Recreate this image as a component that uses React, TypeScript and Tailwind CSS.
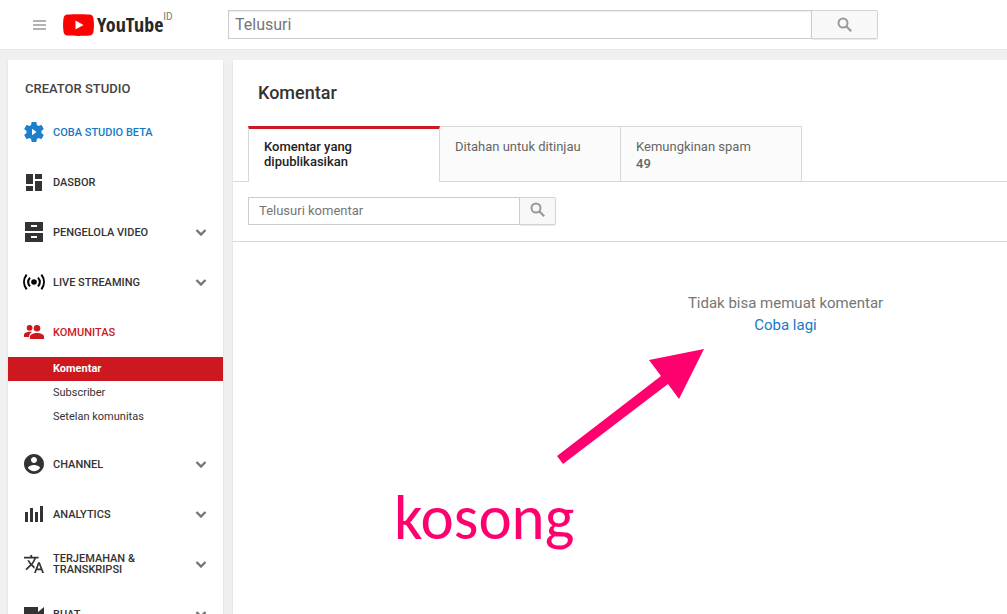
import React from 'react';

interface NavItem {
    label: string;
    icon: React.ReactNode;
    expandable?: boolean;
    tone?: 'blue' | 'red';
    children?: string[];
}

const GearIcon = () => (
    <svg width="24" height="24" viewBox="0 0 24 24" fill="#1b7fcc" fillRule="evenodd">
        <path d="M19.43 12.98c.04-.32.07-.64.07-.98s-.03-.66-.07-.98l2.11-1.65c.19-.15.24-.42.12-.64l-2-3.46c-.12-.22-.39-.3-.61-.22l-2.49 1c-.52-.4-1.08-.73-1.69-.98l-.38-2.65C14.46 2.18 14.25 2 14 2h-4c-.25 0-.46.18-.49.42l-.38 2.65c-.61.25-1.17.59-1.69.98l-2.49-1c-.23-.09-.49 0-.61.22l-2 3.46c-.13.22-.07.49.12.64l2.11 1.65c-.04.32-.07.65-.07.98s.03.66.07.98l-2.11 1.65c-.19.15-.24.42-.12.64l2 3.46c.12.22.39.3.61.22l2.49-1c.52.4 1.08.73 1.69.98l.38 2.65c.03.24.24.42.49.42h4c.25 0 .46-.18.49-.42l.38-2.65c.61-.25 1.17-.59 1.69-.98l2.49 1c.23.09.49 0 .61-.22l2-3.46c.12-.22.07-.49-.12-.64l-2.11-1.65zM10 8.8v6.4l4.5-3.2z" />
    </svg>
);

const DashboardIcon = () => (
    <svg width="24" height="24" viewBox="0 0 24 24" fill="#333">
        <path d="M4 4h7v10H4zM4 16h7v5H4zM13 4h7v5h-7zM13 11h7v10h-7z" />
    </svg>
);

const VideoManagerIcon = () => (
    <svg width="24" height="24" viewBox="0 0 24 24" fill="#333" fillRule="evenodd">
        <path d="M3 2h18v9H3zM9 5v2h6V5zM3 13h18v9H3zM9 16v2h6v-2z" />
    </svg>
);

const LiveIcon = () => (
    <svg width="24" height="24" viewBox="0 0 24 24" fill="none" stroke="#000" strokeWidth="2">
        <circle cx="12" cy="12" r="2.8" fill="#000" stroke="none" />
        <path d="M8 7.6c-2.2 2.6-2.2 6.2 0 8.8M16 7.6c2.2 2.6 2.2 6.2 0 8.8M4.6 4.6c-3.4 4.5-3.4 10.3 0 14.8M19.4 4.6c3.4 4.5 3.4 10.3 0 14.8" />
    </svg>
);

const CommunityIcon = () => (
    <svg width="24" height="24" viewBox="0 0 24 24" fill="#cc181e">
        <circle cx="7.6" cy="7.8" r="2.9" />
        <circle cx="15" cy="8.2" r="3.3" />
        <path d="M2 17v-2.2c0-2.2 3.4-3.2 6.4-3.1.7 0 1.3.1 1.8.2C8.2 12.9 7.2 14.3 7.2 16v1z" />
        <path d="M8 19v-2.4c0-2.4 3.8-3.7 7-3.7s7 1.3 7 3.7V19z" />
    </svg>
);

const ChannelIcon = () => (
    <svg width="24" height="24" viewBox="0 0 24 24" fill="#333">
        <path d="M12 2C6.48 2 2 6.48 2 12s4.48 10 10 10 10-4.48 10-10S17.52 2 12 2zm0 3c1.66 0 3 1.34 3 3s-1.34 3-3 3-3-1.34-3-3 1.34-3 3-3zm0 14.2c-2.5 0-4.71-1.28-6-3.22.03-1.99 4-3.08 6-3.08 1.99 0 5.97 1.09 6 3.08-1.29 1.94-3.5 3.22-6 3.22z" />
    </svg>
);

const AnalyticsIcon = () => (
    <svg width="24" height="24" viewBox="0 0 24 24" fill="#333">
        <path d="M3 10h3v10H3zM8 6h3v14H8zM13 10h3v10h-3zM18 4h3v16h-3z" />
    </svg>
);

const TranslateIcon = () => (
    <svg width="24" height="24" viewBox="-1.2 -1.2 26.4 26.4" fill="#333">
        <path d="M12.87 15.07l-2.54-2.51.03-.03c1.74-1.94 2.98-4.17 3.71-6.53H17V4h-7V2H8v2H1v1.99h11.17C11.5 7.92 10.44 9.75 9 11.35 8.07 10.32 7.3 9.19 6.69 8h-2c.73 1.63 1.73 3.17 2.98 4.56l-5.09 5.02L4 19l5-5 3.11 3.11.76-2.04zM18.5 10h-2L12 22h2l1.12-3h4.75L21 22h2l-4.5-12zm-2.62 7l1.62-4.33L19.12 17h-3.24z" />
    </svg>
);

const CameraIcon = () => (
    <svg width="24" height="24" viewBox="0 0 24 24" fill="#333">
        <path d="M2 5h14v5l6-5v14l-6-5v5H2z" />
    </svg>
);

const ChevronIcon = () => (
    <svg width="12" height="8" viewBox="0 0 12 8" fill="none" stroke="#757575" strokeWidth="2.4">
        <path d="M1.5 2L6 6.5l4.5-4.5" />
    </svg>
);

const SearchIcon = () => (
    <svg width="16" height="16" viewBox="0 0 16 16" fill="none" stroke="#999" strokeWidth="2">
        <circle cx="6" cy="6" r="4.5" />
        <path d="M9.2 9.2l5 5" strokeWidth="2.2" />
    </svg>
);

const MenuIcon = () => (
    <svg width="13" height="10" viewBox="0 0 13 10" fill="#b3b3b3">
        <path d="M0 0h13v2H0zM0 4h13v2H0zM0 8h13v2H0z" />
    </svg>
);

const NAV_ITEMS: NavItem[] = [
    { label: 'COBA STUDIO BETA', icon: <GearIcon />, tone: 'blue' },
    { label: 'DASBOR', icon: <DashboardIcon /> },
    { label: 'PENGELOLA VIDEO', icon: <VideoManagerIcon />, expandable: true },
    { label: 'LIVE STREAMING', icon: <LiveIcon />, expandable: true },
    { label: 'KOMUNITAS', icon: <CommunityIcon />, tone: 'red', children: ['Komentar', 'Subscriber', 'Setelan komunitas'] },
    { label: 'CHANNEL', icon: <ChannelIcon />, expandable: true },
    { label: 'ANALYTICS', icon: <AnalyticsIcon />, expandable: true },
    { label: 'TERJEMAHAN & TRANSKRIPSI', icon: <TranslateIcon />, expandable: true },
    { label: 'BUAT', icon: <CameraIcon />, expandable: true },
];

const getToneColor = (tone?: NavItem['tone']) => {
    switch (tone) {
        case 'blue': return 'text-[#167ac6]';
        case 'red': return 'text-[#cc181e]';
        default: return 'text-[#333]';
    }
};

const Masthead = () => (
    <header className="flex h-[50px] shrink-0 items-center border-b border-[#e8e8e8] bg-white">
        <button type="button" aria-label="Menu" className="ml-[33px]">
            <MenuIcon />
        </button>
        <a href="#" className="ml-[17px] flex h-7 w-[165px] items-center">
            <svg className="mr-[3px]" width="31" height="22" viewBox="0 0 31 22">
                <path d="M4.5.5C11 0 20 0 26.5.5c2.5.2 3.7 1.5 4 4 .6 4.5.6 8.5 0 13-.3 2.5-1.5 3.8-4 4-6.5.5-15.500.5-22 0-2.5-.2-3.7-1.5-4-4-.6-4.5-.6-8.5 0-13 .3-2.5 1.5-3.8 4-4z" fill="#f00" />
                <path d="M12.5 6.5v9l8-4.5z" fill="#fff" />
            </svg>
            <span className="font-['Noto_Sans_ExtraCondensed','Open_Sans_Condensed','Roboto_Condensed','Liberation_Sans_Narrow',sans-serif] text-[20px] leading-6 font-bold text-[#282828]">YouTube</span>
            <span className="self-start text-[10px] leading-3 text-[#777]">ID</span>
        </a>
        <form className="flex h-[29px] w-[650px]">
            <input
                type="text"
                aria-label="Telusuri"
                placeholder="Telusuri"
                className="min-w-0 flex-1 border border-[#ccc] bg-white px-[6px] text-base shadow-[inset_0_1px_2px_#eee] placeholder:text-[#767676]"
            />
            <button type="button" aria-label="Cari" className="flex w-[66px] items-center justify-center rounded-r-xs border border-l-0 border-[#d3d3d3] bg-[#f8f8f8] shadow-[0_1px_0_rgba(0,0,0,0.08)]">
                <SearchIcon />
            </button>
        </form>
    </header>
);

const Sidebar = () => (
    <nav className="w-[215px] shrink-0 bg-white shadow-[0_1px_2px_rgba(0,0,0,0.1)]">
        <h2 className="px-[17px] pt-5 pb-[9px] text-[13px] leading-[18px] font-medium text-[#444]">CREATOR STUDIO</h2>
        {NAV_ITEMS.map((item) => (
            <div key={item.label}>
                <a href="#" className={`flex h-[50px] items-center gap-[7px] pr-4 pl-[14px] text-[11px] leading-[11px] font-medium ${getToneColor(item.tone)}`}>
                    {item.icon}
                    <span className="w-[110px]">{item.label}</span>
                    {item.expandable && (
                        <span className="ml-auto">
                            <ChevronIcon />
                        </span>
                    )}
                </a>
                {item.children && (
                    <ul className="pb-[10px]">
                        {item.children.map((child, index) => (
                            <li key={child}>
                                <a href="#" className={`block pl-[45px] text-[11px] leading-6 ${index === 0 ? 'bg-[#cc181e] font-bold text-white' : 'text-[#333]'}`}>
                                    {child}
                                </a>
                            </li>
                        ))}
                    </ul>
                )}
            </div>
        ))}
    </nav>
);

const CommentTabs = () => (
    <div role="tablist" className="flex h-14 text-[13px] leading-[15px]">
        <div className="w-[15px] border-b border-[#d8d8d8]" />
        <button type="button" role="tab" aria-selected="true" className="flex w-[192px] flex-col items-start border-x border-t-[3px] border-x-[#d8d8d8] border-t-[#cc181e] px-[15px] pt-[10px] text-left font-medium text-[#222]">
            Komentar yang dipublikasikan
        </button>
        <button type="button" role="tab" aria-selected="false" className="flex w-[181px] flex-col items-start border-y border-r border-[#d8d8d8] bg-[#fbfbfb] px-[15px] pt-3 text-left text-[#666]">
            Ditahan untuk ditinjau
        </button>
        <button type="button" role="tab" aria-selected="false" className="flex w-[181px] flex-col items-start gap-[2px] border-y border-r border-[#d8d8d8] bg-[#fbfbfb] px-[15px] pt-3 text-left text-[#666]">
            Kemungkinan spam
            <span className="font-medium">49</span>
        </button>
        <div className="flex-1 border-b border-[#d8d8d8]" />
    </div>
);

const Annotation = () => (
    <div className="pointer-events-none absolute top-[288px] left-[161px] text-[#ff006e]">
        <svg className="ml-[163px]" width="148" height="116" viewBox="0 0 148 116" fill="currentColor">
            <path d="M147 1L92 12l12 16L0 108l6 8 105-80 11 15z" />
        </svg>
        <p className="mt-[18px] font-['Carlito','Lato',sans-serif] text-[63px] leading-[72px]">kosong</p>
    </div>
);

const App: React.FC = () => {
    return (
        <div className="flex h-screen flex-col overflow-hidden bg-[#f0f0f0] font-['Roboto',sans-serif]">
            <Masthead />
            <div className="flex min-h-0 flex-1 gap-[10px] pt-[10px] pl-2">
                <Sidebar />
                {/* the comments panel keeps a minimum width and is cut off on narrow windows */}
                <main className="relative min-w-[1105px] flex-1 bg-white shadow-[0_1px_2px_rgba(0,0,0,0.1)]">
                    <h1 className="px-[25px] py-[21px] text-lg leading-6 font-medium text-[#333]">Komentar</h1>
                    <CommentTabs />
                    <form className="flex h-[60px] items-start border-b border-[#d8d8d8] px-[15px] pt-[15px]">
                        <input
                            type="text"
                            aria-label="Telusuri komentar"
                            placeholder="Telusuri komentar"
                            className="h-7 w-[272px] border border-[#ccc] bg-white px-[10px] pb-[2px] text-[13px] placeholder:text-[#767676]"
                        />
                        <button type="button" aria-label="Cari komentar" className="flex h-7 w-9 items-center justify-center rounded-r-xs border border-l-0 border-[#d3d3d3] bg-[#f8f8f8] pb-[2px] shadow-[0_1px_0_rgba(0,0,0,0.08)]">
                            <SearchIcon />
                        </button>
                    </form>
                    <div className="pt-[50px] text-center text-[15px] leading-[22px] text-[#767676]">
                        <p>Tidak bisa memuat komentar</p>
                        <a href="#" className="text-[#167ac6]">Coba lagi</a>
                    </div>
                    <Annotation />
                </main>
            </div>
        </div>
    );
};

export default App;
